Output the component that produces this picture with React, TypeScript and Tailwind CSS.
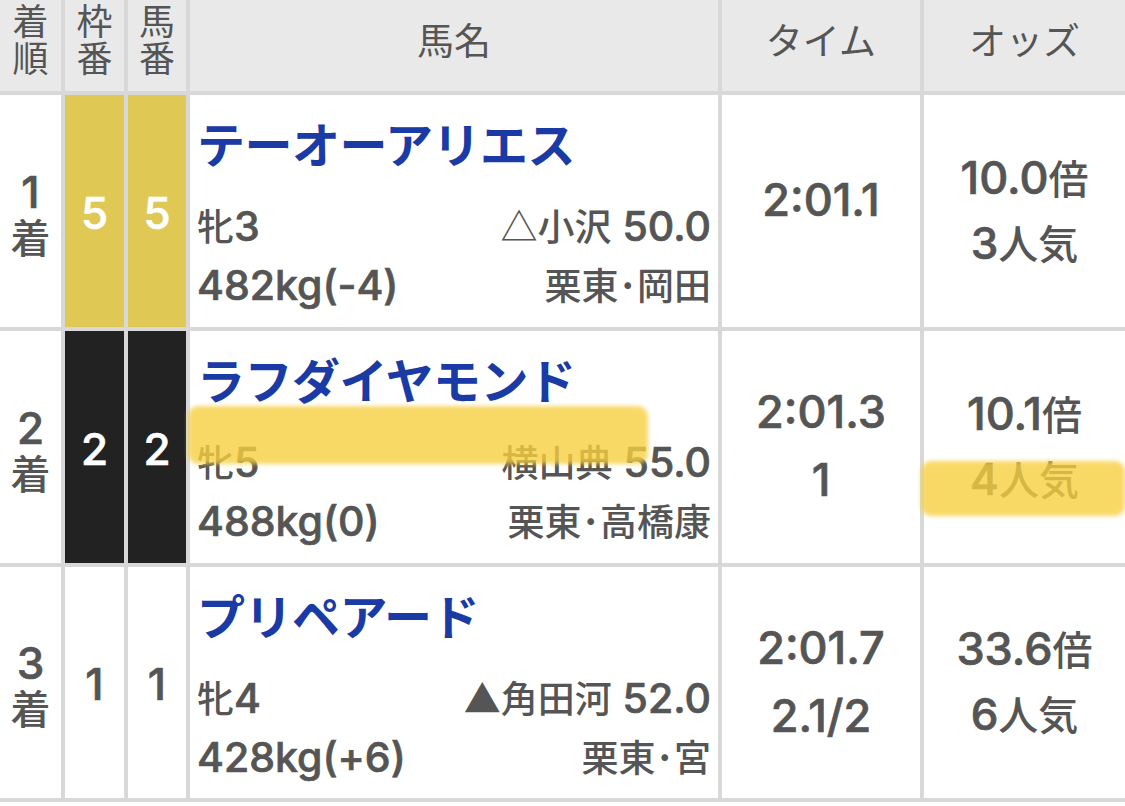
import React from "react";

type Row = {
  pos: string;
  waku: string;
  uma: string;
  wakuColor: string;
  wakuText: string;
  name: string;
  sexAge: string;
  jockey: string;
  weight: string;
  trainer: string;
  time: string[];
  timeCls: string;
  odds: string;
  pop: string;
};

const rows: Row[] = [
  {
    pos: "1",
    waku: "5",
    uma: "5",
    wakuColor: "bg-[#dfc853]",
    wakuText: "text-white",
    name: "テーオーアリエス",
    sexAge: "牝3",
    jockey: "△小沢 50.0",
    weight: "482kg(-4)",
    trainer: "栗東・岡田",
    time: ["2:01.1"],
    timeCls: "pb-[26px]",
    odds: "10.0倍",
    pop: "3人気",
  },
  {
    pos: "2",
    waku: "2",
    uma: "2",
    wakuColor: "bg-[#222222]",
    wakuText: "text-white",
    name: "ラフダイヤモンド",
    sexAge: "牝5",
    jockey: "横山典 55.0",
    weight: "488kg(0)",
    trainer: "栗東・高橋康",
    time: ["2:01.3", "1"],
    timeCls: "pb-[6px]",
    odds: "10.1倍",
    pop: "4人気",
  },
  {
    pos: "3",
    waku: "1",
    uma: "1",
    wakuColor: "bg-white",
    wakuText: "text-[#555]",
    name: "プリペアード",
    sexAge: "牝4",
    jockey: "▲角田河 52.0",
    weight: "428kg(+6)",
    trainer: "栗東・宮",
    time: ["2:01.7", "2.1/2"],
    timeCls: "pb-[6px]",
    odds: "33.6倍",
    pop: "6人気",
  },
];

const cjk = "font-['Noto_Sans_CJK_JP',sans-serif]";
// Inter here only has the regular cut, so thicken it a touch
const latin = "font-['Inter','Noto_Sans_CJK_JP',sans-serif] [-webkit-text-stroke:0.7px_currentColor]";

// latin runs are drawn a little larger than the kana/kanji, as on the phone
function Mixed({ text, latinCls }: { text: string; latinCls: string }) {
  const parts = text.match(/[\x20-\x7e]+|[^\x20-\x7e]+/g) ?? [];
  return (
    <span>
      {parts.map((p, i) =>
        /^[\x20-\x7e]+$/.test(p) ? (
          <span key={i} className={`${latin} ${latinCls}`}>
            {p}
          </span>
        ) : (
          <span key={i}>{p.replace("・", "･")}</span>
        )
      )}
    </span>
  );
}

export default function App() {
  return (
    <div className={`w-[1125px] h-[806px] bg-white ${cjk} text-[#555] overflow-hidden`}>
      <div className="relative">
        <div className="grid grid-cols-[61px_59px_58px_528px_198px_1fr] grid-rows-[91px_232px_232px_231px] gap-[4px] bg-[#d8d8d8] pb-[4px]">
          {/* header */}
          <div className="bg-[#e9e9e9] flex flex-col items-center pt-[1px] text-[36px] leading-[37px]">
            <span>着</span>
            <span>順</span>
          </div>
          <div className="bg-[#e9e9e9] flex flex-col items-center pt-[1px] text-[36px] leading-[37px]">
            <span>枠</span>
            <span>番</span>
          </div>
          <div className="bg-[#e9e9e9] flex flex-col items-center pt-[1px] text-[36px] leading-[37px]">
            <span>馬</span>
            <span>番</span>
          </div>
          <div className="bg-[#e9e9e9] flex items-center justify-center pb-[12px] text-[37px]">馬名</div>
          <div className="bg-[#e9e9e9] flex items-center justify-center pb-[12px] text-[37px]">タイム</div>
          <div className="bg-[#e9e9e9] flex items-center justify-center pb-[12px] text-[37px]">オッズ</div>

          {rows.map((r) => (
            <React.Fragment key={r.pos}>
              <div className="bg-white flex flex-col items-center justify-center pt-[4px] font-medium text-[40px] leading-[44px]">
                <Mixed text={r.pos} latinCls="text-[44px]" />
                <span>着</span>
              </div>
              <div className={`${r.wakuColor} ${r.wakuText} flex items-center justify-center font-medium text-[44px]`}>
                <Mixed text={r.waku} latinCls="text-[44px]" />
              </div>
              <div className={`${r.wakuColor} ${r.wakuText} flex items-center justify-center font-medium text-[44px]`}>
                <Mixed text={r.uma} latinCls="text-[44px]" />
              </div>
              <div className="bg-white flex flex-col px-[7px] pt-[17px] font-medium">
                <div className="text-[#1a3aa6] font-bold text-[48px] leading-[60px] tracking-[-0.5px]">{r.name}</div>
                <div className="mt-[24px] flex justify-between items-baseline text-[37px] leading-[58px]">
                  <Mixed text={r.sexAge} latinCls="text-[41px]" />
                  <Mixed text={r.jockey} latinCls="text-[41px]" />
                </div>
                <div className="flex justify-between items-baseline text-[37px] leading-[58px]">
                  <Mixed text={r.weight} latinCls="text-[41px]" />
                  <Mixed text={r.trainer} latinCls="text-[41px]" />
                </div>
              </div>
              <div className={`bg-white flex flex-col items-center justify-center font-medium text-[45px] leading-[65px] ${r.timeCls}`}>
                {r.time.map((t) => (
                  <Mixed key={t} text={t} latinCls="text-[45px]" />
                ))}
              </div>
              <div className="bg-white flex flex-col items-center justify-center font-medium text-[40px] leading-[65px] pb-[2px]">
                <Mixed text={r.odds} latinCls="text-[45px]" />
                <Mixed text={r.pop} latinCls="text-[44px]" />
              </div>
            </React.Fragment>
          ))}
        </div>

        {/* highlighter marks */}
        <div className="absolute left-[188px] top-[406px] w-[460px] h-[58px] rounded-[10px] bg-[#f6d040]/80 blur-[2px]" />
        <div className="absolute left-[921px] top-[461px] w-[204px] h-[55px] rounded-[10px] bg-[#f6d040]/80 blur-[2px]" />
      </div>
    </div>
  );
}
